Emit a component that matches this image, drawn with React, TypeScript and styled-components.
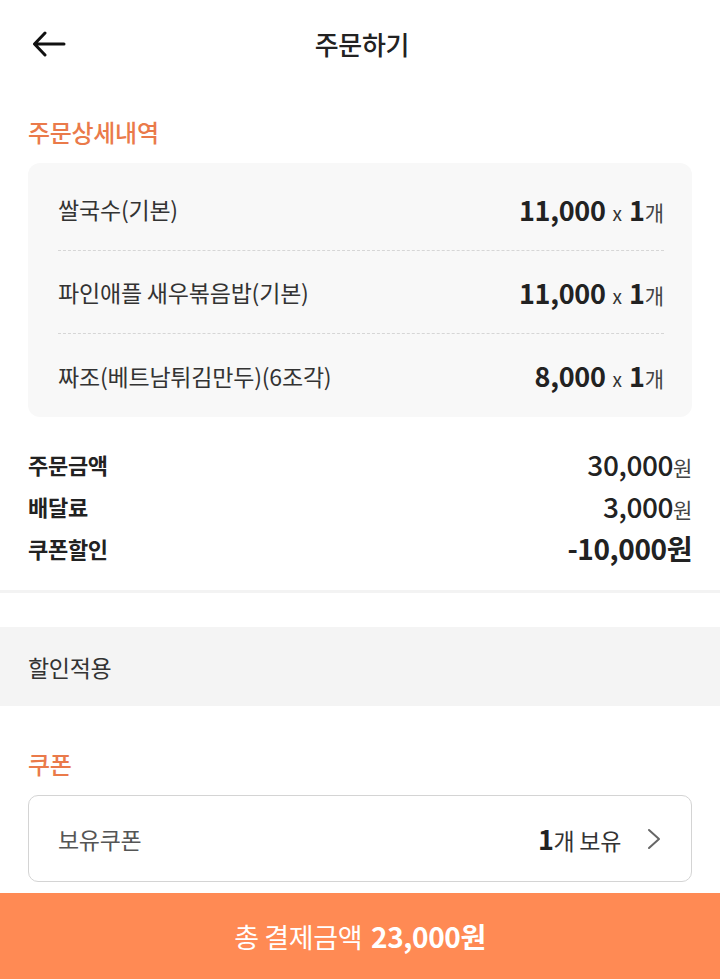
import React from "react";
import styled, { createGlobalStyle } from "styled-components";

const GlobalStyle = createGlobalStyle`
  * { box-sizing: border-box; }
  body {
    margin: 0;
    background: #ffffff;
    font-family: "Noto Sans CJK KR", "Noto Sans", sans-serif;
    color: #222;
  }
`;

const ORANGE = "#ea7a4a";

const Page = styled.div`
  width: 720px;
  min-height: 979px;
  display: flex;
  flex-direction: column;
  background: #fff;
`;

const Header = styled.header`
  height: 88px;
  display: grid;
  grid-template-columns: 1fr auto 1fr;
  align-items: center;
  padding: 0 28px 0 32px;
`;

const BackButton = styled.button`
  border: 0;
  background: none;
  padding: 0;
  width: 36px;
  height: 36px;
  display: flex;
  align-items: center;
  justify-content: flex-start;
  cursor: pointer;
`;

const Title = styled.h1`
  margin: 0;
  font-size: 26px;
  line-height: 36px;
  font-weight: 500;
  color: #222;
  letter-spacing: -0.3px;
`;

const Section = styled.section`
  padding: 0 28px;
  display: flex;
  flex-direction: column;
`;

const SectionTitle = styled.h2<{ $top: number }>`
  margin: ${(p) => p.$top}px 0 16px;
  font-size: 24px;
  line-height: 30px;
  font-weight: 500;
  color: ${ORANGE};
  letter-spacing: -0.3px;
`;

const ItemCard = styled.div`
  background: #f8f8f8;
  border-radius: 12px;
  padding: 5px 28px 0 30px;
  display: flex;
  flex-direction: column;
`;

const ItemRow = styled.div<{ $last?: boolean }>`
  height: 83px;
  display: flex;
  align-items: center;
  justify-content: space-between;
  border-bottom: ${(p) => (p.$last ? "none" : "1px dashed #d6d6d6")};
`;

const ItemName = styled.span`
  font-size: 23px;
  color: #333;
  letter-spacing: -0.2px;
`;

const PriceWrap = styled.span`
  display: flex;
  align-items: baseline;
  color: #222;
`;

const BigNum = styled.span`
  font-size: 27px;
  font-weight: 700;
  letter-spacing: -0.3px;
`;

const Small = styled.span<{ $size?: number; $color?: string; $gap?: number }>`
  font-size: ${(p) => p.$size ?? 17}px;
  color: ${(p) => p.$color ?? "#444"};
  margin: 0 ${(p) => p.$gap ?? 0}px;
  font-weight: 400;
`;

const Summary = styled.div`
  margin-top: 26px;
  padding: 0 28px;
  display: flex;
  flex-direction: column;
`;

const SumRow = styled.div`
  height: 42px;
  display: flex;
  align-items: center;
  justify-content: space-between;
`;

const SumLabel = styled.span`
  font-size: 22px;
  font-weight: 700;
  color: #222;
  letter-spacing: -0.3px;
`;

const SumValue = styled.span<{ $bold?: boolean }>`
  display: flex;
  align-items: baseline;
  font-size: 28px;
  font-weight: ${(p) => (p.$bold ? 700 : 500)};
  color: #222;
  letter-spacing: -0.4px;
`;

const Divider = styled.div`
  margin-top: 21px;
  height: 3px;
  background: #f3f3f3;
`;

const Band = styled.div`
  margin-top: 34px;
  height: 79px;
  background: #f4f4f4;
  display: flex;
  align-items: center;
  padding: 0 28px;
  font-size: 23px;
  color: #333;
  letter-spacing: -0.3px;
`;

const CouponBox = styled.button`
  height: 87px;
  width: 100%;
  border: 1px solid #d4d4d4;
  border-radius: 10px;
  background: #fff;
  display: flex;
  align-items: center;
  justify-content: space-between;
  padding: 0 30px 0 29px;
  font-family: inherit;
  cursor: pointer;
`;

const CouponLabel = styled.span`
  font-size: 23px;
  color: #555;
  letter-spacing: -0.3px;
`;

const CouponRight = styled.span`
  display: flex;
  align-items: center;
  gap: 26px;
`;

const CouponCount = styled.span`
  display: flex;
  align-items: baseline;
  font-size: 23px;
  color: #333;
  letter-spacing: -0.3px;
`;

const CountNum = styled.span`
  font-size: 27px;
  font-weight: 700;
  color: #222;
`;

const PayButton = styled.button`
  margin-top: 11px;
  height: 86px;
  width: 100%;
  border: 0;
  background: #ff8a54;
  color: #fff;
  font-family: inherit;
  font-size: 27px;
  display: flex;
  align-items: center;
  justify-content: center;
  gap: 9px;
  letter-spacing: -0.4px;
  cursor: pointer;
`;

const PayAmount = styled.span`
  font-weight: 700;
  font-size: 28px;
`;

const items = [
  { name: "쌀국수(기본)", price: "11,000", qty: 1 },
  { name: "파인애플 새우볶음밥(기본)", price: "11,000", qty: 1 },
  { name: "짜조(베트남튀김만두)(6조각)", price: "8,000", qty: 1 },
];

export default function App() {
  return (
    <Page>
      <GlobalStyle />
      <Header>
        <BackButton aria-label="뒤로">
          <svg width="34" height="26" viewBox="0 0 34 26" fill="none">
            <path
              d="M32 13H3M13 2L2.5 13L13 24"
              stroke="#111"
              strokeWidth="3"
              strokeLinecap="round"
              strokeLinejoin="round"
            />
          </svg>
        </BackButton>
        <Title>주문하기</Title>
        <span />
      </Header>

      <Section>
        <SectionTitle $top={29}>주문상세내역</SectionTitle>
        <ItemCard>
          {items.map((it, i) => (
            <ItemRow key={it.name} $last={i === items.length - 1}>
              <ItemName>{it.name}</ItemName>
              <PriceWrap>
                <BigNum>{it.price}</BigNum>
                <Small $size={19} $color="#333" $gap={7}>x</Small>
                <BigNum>{it.qty}</BigNum>
                <Small $size={21} $color="#444">개</Small>
              </PriceWrap>
            </ItemRow>
          ))}
        </ItemCard>
      </Section>

      <Summary>
        <SumRow>
          <SumLabel>주문금액</SumLabel>
          <SumValue>
            30,000<Small $size={21} $color="#444">원</Small>
          </SumValue>
        </SumRow>
        <SumRow>
          <SumLabel>배달료</SumLabel>
          <SumValue>
            3,000<Small $size={21} $color="#444">원</Small>
          </SumValue>
        </SumRow>
        <SumRow>
          <SumLabel>쿠폰할인</SumLabel>
          <SumValue $bold>-10,000원</SumValue>
        </SumRow>
      </Summary>

      <Divider />
      <Band>할인적용</Band>

      <Section>
        <SectionTitle $top={43}>쿠폰</SectionTitle>
        <CouponBox>
          <CouponLabel>보유쿠폰</CouponLabel>
          <CouponRight>
            <CouponCount>
              <CountNum>1</CountNum>개 보유
            </CouponCount>
            <svg width="14" height="22" viewBox="0 0 14 22" fill="none">
              <path
                d="M2 2L12 11L2 20"
                stroke="#666"
                strokeWidth="2"
                strokeLinecap="round"
                strokeLinejoin="round"
              />
            </svg>
          </CouponRight>
        </CouponBox>
      </Section>

      <PayButton>
        총 결제금액 <PayAmount>23,000원</PayAmount>
      </PayButton>
    </Page>
  );
}
